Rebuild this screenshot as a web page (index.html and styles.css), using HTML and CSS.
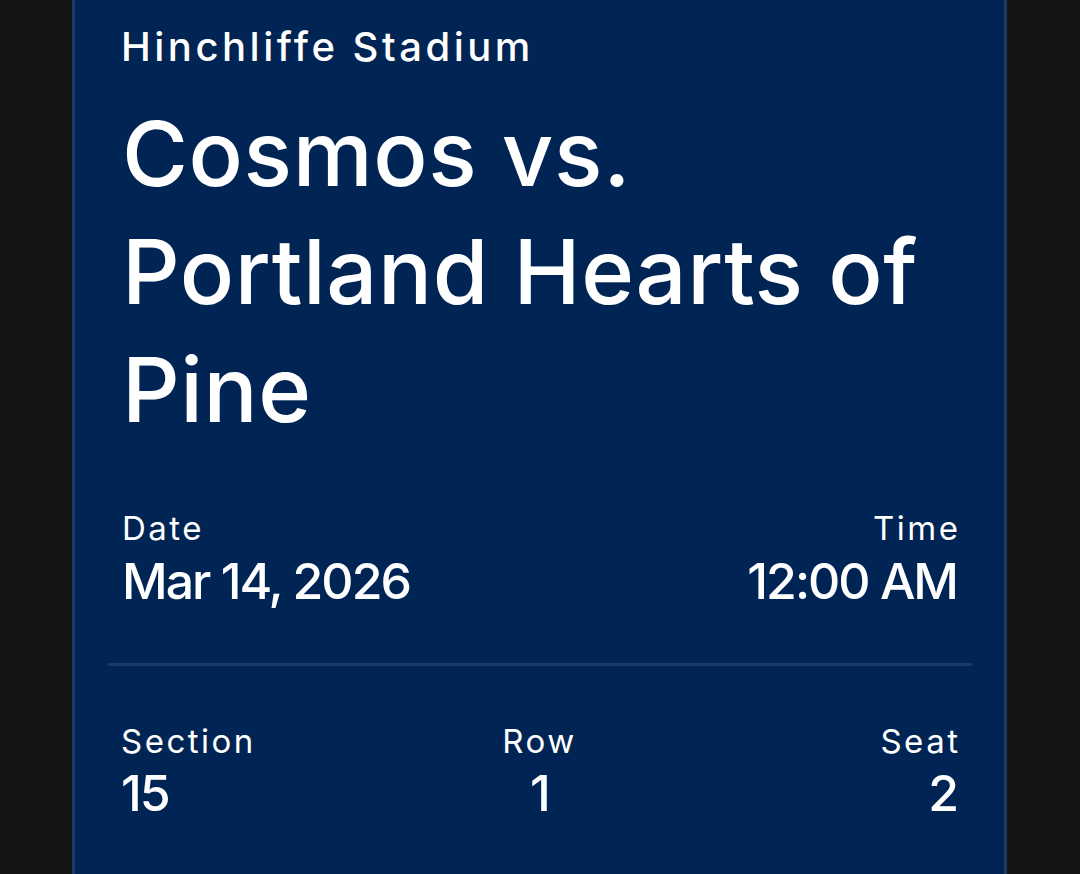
FILE: index.html
```html
<!DOCTYPE html>
<html lang="en">
<head>
<meta charset="utf-8">
<title>Ticket</title>
<link rel="stylesheet" href="styles.css">
</head>
<body>
<div class="page">
  <div class="card">
    <div class="venue">Hinchliffe Stadium</div>
    <h1 class="title">Cosmos vs. Portland Hearts of Pine</h1>
    <div class="pair">
      <div class="field">
        <div class="label">Date</div>
        <div class="value">Mar 14, 2026</div>
      </div>
      <div class="field right">
        <div class="label">Time</div>
        <div class="value">12:00 AM</div>
      </div>
    </div>
    <div class="divider"></div>
    <div class="seats">
      <div class="field">
        <div class="label">Section</div>
        <div class="value">15</div>
      </div>
      <div class="field center">
        <div class="label">Row</div>
        <div class="value">1</div>
      </div>
      <div class="field right">
        <div class="label">Seat</div>
        <div class="value">2</div>
      </div>
    </div>
  </div>
</div>
</body>
</html>
```

FILE: styles.css
```css
html, body {
  margin: 0;
  padding: 0;
  background: #141417;
  height: 100%;
  overflow: hidden;
}
body {
  font-family: "Inter", "Open Sans", sans-serif;
  color: #ffffff;
}
.page {
  display: flex;
  justify-content: flex-start;
  height: 100%;
  padding-left: 72px;
}
.card {
  width: 935px;
  height: 100%;
  background: #002554;
  border-left: 3px solid #213a62;
  border-right: 3px solid #213a62;
  padding: 23px 32px 0 33px;
  box-sizing: border-box;
}
.venue {
  font-size: 40px;
  line-height: 48px;
  padding: 0 13px;
  font-weight: 500;
  letter-spacing: 3.5px;
}
.title {
  margin: 24px 0 0 0;
  padding: 0 14px;
  font-size: 90px;
  line-height: 118px;
  font-weight: 500;
  letter-spacing: 0.6px;
}
.pair {
  display: flex;
  justify-content: space-between;
  margin-top: 59px;
  padding: 0 14px;
}
.label {
  font-size: 33px;
  line-height: 40px;
  letter-spacing: 2.5px;
}
.value {
  font-size: 50px;
  line-height: 60px;
  margin-top: 3px;
  font-weight: 500;
  letter-spacing: -2px;
}
.field {
  min-width: 0;
}
.right { text-align: right; }
.center { text-align: center; }
.right .label { margin-right: -2.5px; }
.right .value { margin-right: 1px; }
.divider {
  height: 3px;
  background: #1b3a67;
  margin-top: 52px;
}
.seats {
  display: grid;
  grid-template-columns: 1fr 1fr 1fr;
  margin-top: 55px;
  padding: 0 14px 0 13px;
}
.seats .value { margin-top: 2px; }
```
